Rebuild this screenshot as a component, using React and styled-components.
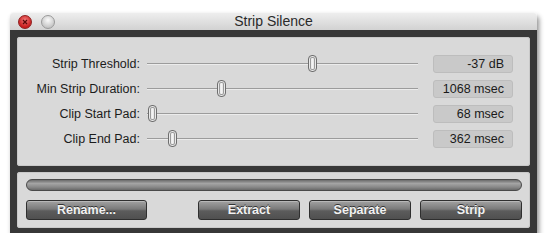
import React from 'react';
import styled, { createGlobalStyle } from 'styled-components';

const GlobalStyle = createGlobalStyle`
  body {
    margin: 0;
    background: #ffffff;
    font-family: "Liberation Sans", Arial, sans-serif;
  }
`;

const Window = styled.div`
  margin: 12px 0 0 10px;
  width: 527px;
  box-shadow: 2px 4px 5px rgba(0, 0, 0, 0.45);
  border-radius: 4px 4px 0 0;
`;

const TitleBar = styled.div`
  position: relative;
  height: 18px;
  display: flex;
  align-items: center;
  padding-left: 8px;
  gap: 9px;
  background: linear-gradient(#eeeeee, #d2d2d2);
  border-radius: 4px 4px 0 0;
  border-top: 1px solid #f6f6f6;
  box-sizing: border-box;
`;

const Title = styled.div`
  position: absolute;
  left: 0;
  right: 0;
  top: 0;
  text-align: center;
  font-size: 14px;
  color: #2a2a2a;
  pointer-events: none;
`;

const Light = styled.div`
  width: 12px;
  height: 12px;
  border-radius: 50%;
  display: flex;
  align-items: center;
  justify-content: center;
  background: ${p => (p.$red
    ? 'radial-gradient(circle at 50% 35%, #f37a7a, #c81d1d 70%)'
    : 'radial-gradient(circle at 50% 35%, #fafafa, #c4c4c4 75%)')};
  border: 1px solid ${p => (p.$red ? '#8e2020' : '#9a9a9a')};
`;

const Frame = styled.div`
  background: #383838;
  padding: 7px 7px 5px 7px;
  display: flex;
  flex-direction: column;
  gap: 6px;
`;

const Panel = styled.div`
  background: #d9d9d9;
  border-radius: 3px;
  box-shadow: inset 0 0 0 1px #c9c9c9;
`;

const SettingsGrid = styled(Panel)`
  display: grid;
  grid-template-columns: 123px 271px 88px;
  column-gap: 7px;
  row-gap: 7px;
  padding: 18px 17px 18px 0;
  height: 129px;
  box-sizing: border-box;
`;

const Label = styled.div`
  font-size: 12.5px;
  color: #1c1c1c;
  text-align: right;
  line-height: 18px;
  white-space: nowrap;
`;

const Track = styled.div`
  position: relative;
  height: 18px;
  &::before {
    content: '';
    position: absolute;
    left: 0;
    right: 0;
    top: 8px;
    height: 1px;
    background: #9c9c9c;
    border-bottom: 1px solid #ececec;
  }
`;

const Thumb = styled.div`
  position: absolute;
  top: 0;
  width: 9px;
  height: 17px;
  margin-left: -4.5px;
  box-sizing: border-box;
  border-radius: 4px;
  border: 1px solid #6e6e6e;
  background: linear-gradient(90deg, #c6c6c6, #f6f6f6 45%, #cfcfcf);
  box-shadow: inset 0 0 0 1px #e8e8e8, inset 0 0 0 2px #9a9a9a;
`;

const Value = styled.div`
  justify-self: end;
  height: 18px;
  width: 80px;
  box-sizing: border-box;
  border-radius: 3px;
  background: #c9c9c9;
  border: 1px solid #bdbdbd;
  font-size: 12.5px;
  line-height: 16px;
  color: #1a1a1a;
  text-align: right;
  padding-right: 8px;
`;

const ActionPanel = styled(Panel)`
  height: 56px;
  box-sizing: border-box;
  padding: 7px 8px 8px 9px;
  display: flex;
  flex-direction: column;
  gap: 9px;
`;

const Progress = styled.div`
  height: 12px;
  box-sizing: border-box;
  border-radius: 6px;
  border: 1px solid #4a4a4a;
  background: linear-gradient(#6c6c6c, #a4a4a4 35%, #8a8a8a 70%, #6a6a6a);
`;

const ButtonRow = styled.div`
  display: flex;
  gap: 9px;
`;

const Button = styled.button`
  width: ${p => p.$width}px;
  margin-right: ${p => p.$after || 0}px;
  height: 20px;
  padding: 0;
  border: 1px solid #2f2f2f;
  border-radius: 3px;
  background: linear-gradient(#a2a2a2, #7a7a7a 45%, #5c5c5c 55%, #505050);
  color: #f2f2f2;
  font-family: "Liberation Sans", Arial, sans-serif;
  font-size: 12.5px;
  font-weight: bold;
  text-shadow: 0 -1px 0 #333;
  box-shadow: inset 0 1px 0 rgba(255, 255, 255, 0.25);
`;

const rows = [
  { label: 'Strip Threshold:', pos: 165.5, value: '-37 dB' },
  { label: 'Min Strip Duration:', pos: 74, value: '1068 msec' },
  { label: 'Clip Start Pad:', pos: 5.5, value: '68 msec' },
  { label: 'Clip End Pad:', pos: 25.5, value: '362 msec' },
];

export default function App() {
  return (
    <>
      <GlobalStyle />
      <Window>
        <TitleBar>
          <Light $red>
            <svg width="6" height="6" viewBox="0 0 6 6">
              <path d="M1 1L5 5M5 1L1 5" stroke="#5a0a0a" strokeWidth="1.3" />
            </svg>
          </Light>
          <Light />
          <Title>Strip Silence</Title>
        </TitleBar>
        <Frame>
          <SettingsGrid>
            {rows.map(r => (
              <React.Fragment key={r.label}>
                <Label>{r.label}</Label>
                <Track>
                  <Thumb style={{ left: r.pos }} />
                </Track>
                <Value>{r.value}</Value>
              </React.Fragment>
            ))}
          </SettingsGrid>
          <ActionPanel>
            <Progress />
            <ButtonRow>
              <Button $width={121} $after={42}>Rename...</Button>
              <Button $width={102}>Extract</Button>
              <Button $width={102}>Separate</Button>
              <Button $width={102}>Strip</Button>
            </ButtonRow>
          </ActionPanel>
        </Frame>
      </Window>
    </>
  );
}
